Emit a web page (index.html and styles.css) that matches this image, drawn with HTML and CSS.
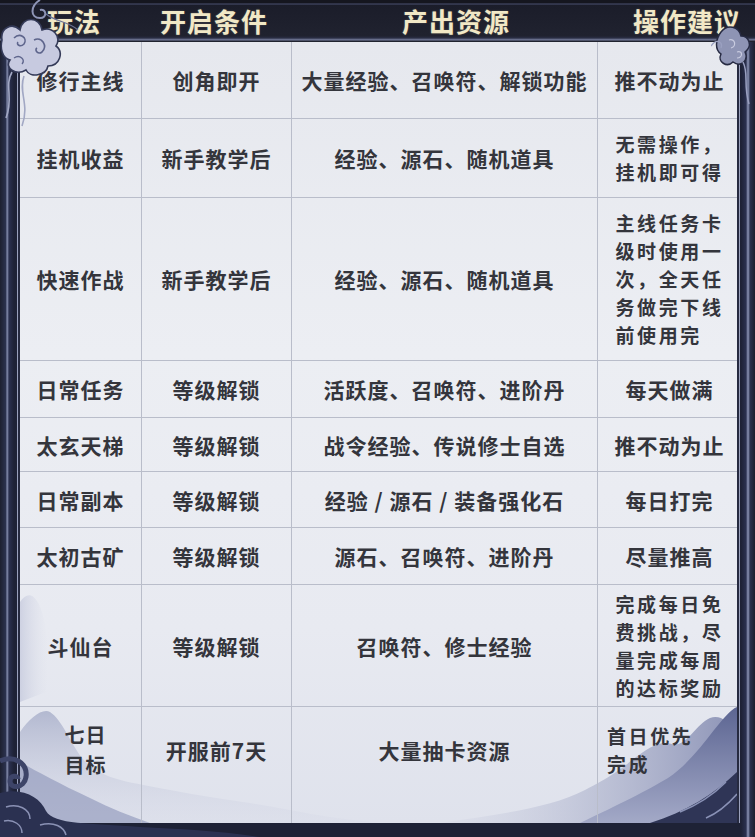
FILE: index.html
```html
<!DOCTYPE html>
<html lang="zh">
<head>
<meta charset="utf-8">
<link rel="stylesheet" href="styles.css">
</head>
<body>
<div class="page">
  <div class="head">
    <span class="h h1">玩法</span>
    <span class="h h2">开启条件</span>
    <span class="h h3">产出资源</span>
    <span class="h h4">操作建议</span>
  </div>
  <div class="body">
    <svg class="mist" width="717" height="781" viewBox="0 0 717 781" preserveAspectRatio="none">
      <defs>
        <linearGradient id="mL" x1="0" y1="0" x2="0" y2="1">
          <stop offset="0" stop-color="#a2a9c6" stop-opacity="0.75"/>
          <stop offset="1" stop-color="#d4d7e6" stop-opacity="0.2"/>
        </linearGradient>
        <linearGradient id="mL2" x1="0" y1="0" x2="1" y2="0">
          <stop offset="0" stop-color="#b9bed6" stop-opacity="0.8"/>
          <stop offset="1" stop-color="#d8dbe8" stop-opacity="0"/>
        </linearGradient>
        <linearGradient id="mR" x1="0" y1="0" x2="0" y2="1">
          <stop offset="0" stop-color="#5c6592"/>
          <stop offset="1" stop-color="#a3a9c7"/>
        </linearGradient>
        <linearGradient id="mR2" x1="0" y1="0" x2="1" y2="0">
          <stop offset="0" stop-color="#c4c8dc" stop-opacity="0.1"/>
          <stop offset="1" stop-color="#8c93b6"/>
        </linearGradient>
      </defs>
      <path d="M0 560 C8 548 16 552 22 570 C28 590 30 620 26 650 L0 660 Z" fill="url(#mL2)" opacity="0.7"/>
      <path d="M0 690 C10 676 22 666 30 670 C42 678 50 700 62 716 C80 738 110 740 150 748 C190 756 230 760 270 768 C300 774 330 778 360 781 L0 781 Z" fill="url(#mL)"/>
      <path d="M0 720 C18 730 40 742 70 756 C90 766 110 774 130 781 L0 781 Z" fill="#8b93b8" opacity="0.6"/>
      <path d="M420 781 C480 772 530 766 565 748 C590 735 600 728 612 718 C628 706 640 698 652 702 C666 706 676 682 690 676 C700 672 708 680 717 688 L717 781 Z" fill="url(#mR2)"/>
      <path d="M560 781 C600 762 628 748 648 736 C666 724 680 706 694 688 C704 676 710 668 717 665 L717 781 Z" fill="url(#mR)"/>
      <path d="M630 781 C666 770 694 752 717 730 L717 781 Z" fill="#2f3556"/>
      <path d="M660 770 C680 762 696 750 706 740 M686 776 C700 770 710 760 717 752" fill="none" stroke="#8a92b6" stroke-width="1.5"/>
    </svg>
    <div class="grid">
      <div class="c r1">修行主线</div><div class="c r1">创角即开</div><div class="c r1">大量经验、召唤符、解锁功能</div><div class="c r1 last">推不动为止</div>
      <div class="c r2">挂机收益</div><div class="c r2">新手教学后</div><div class="c r2">经验、源石、随机道具</div><div class="c r2 last multi">无需操作，<br>挂机即可得</div>
      <div class="c r3">快速作战</div><div class="c r3">新手教学后</div><div class="c r3">经验、源石、随机道具</div><div class="c r3 last multi">主线任务卡<br>级时使用一<br>次，全天任<br>务做完下线<br>前使用完</div>
      <div class="c r4">日常任务</div><div class="c r4">等级解锁</div><div class="c r4">活跃度、召唤符、进阶丹</div><div class="c r4 last">每天做满</div>
      <div class="c r5">太玄天梯</div><div class="c r5">等级解锁</div><div class="c r5">战令经验、传说修士自选</div><div class="c r5 last">推不动为止</div>
      <div class="c r6">日常副本</div><div class="c r6">等级解锁</div><div class="c r6">经验 / 源石 / 装备强化石</div><div class="c r6 last">每日打完</div>
      <div class="c r7">太初古矿</div><div class="c r7">等级解锁</div><div class="c r7">源石、召唤符、进阶丹</div><div class="c r7 last">尽量推高</div>
      <div class="c r8">斗仙台</div><div class="c r8">等级解锁</div><div class="c r8">召唤符、修士经验</div><div class="c r8 last multi">完成每日免<br>费挑战，尽<br>量完成每周<br>的达标奖励</div>
      <div class="c r9 tall">七日<br>目标</div><div class="c r9">开服前7天</div><div class="c r9">大量抽卡资源</div><div class="c r9 last multi left">首日优先<br>完成</div>
    </div>
  </div>
  <svg class="deco tl" width="80" height="130" viewBox="0 0 80 130">
    <path d="M40 0 C30 6 30 18 40 18 C48 18 46 8 40 10" fill="none" stroke="#8e95b6" stroke-width="2"/>
    <path d="M46 14 C56 22 70 22 78 30" fill="none" stroke="#6c7396" stroke-width="1.2"/>
    <path d="M2 40 C0 28 12 22 20 30 C22 16 40 16 42 30 C52 26 62 36 56 46 C64 52 60 66 48 66 C46 76 30 78 26 70 C16 76 4 68 10 60 C2 58 0 48 2 40 Z" fill="#c7cae0" stroke="#343a58" stroke-width="1.6"/>
    <path d="M14 38 C20 32 28 38 24 44 C20 48 16 44 18 42" fill="none" stroke="#5e658c" stroke-width="1.6"/>
    <path d="M34 40 C42 36 48 46 42 52 C38 55 34 50 37 48" fill="none" stroke="#5e658c" stroke-width="1.6"/>
    <path d="M14 58 C20 54 26 60 22 64" fill="none" stroke="#5e658c" stroke-width="1.4"/>
    <path d="M12 72 C4 86 14 98 6 118 M24 76 C18 92 30 104 22 126" fill="none" stroke="#a2a8c4" stroke-width="1.6"/>
  </svg>
  <svg class="deco tr" width="44" height="90" viewBox="0 0 44 90">
    <path d="M10 16 C16 8 28 10 30 20 C38 20 42 30 34 36 C38 44 30 52 22 46 C16 52 6 46 10 38 C4 34 4 24 10 16 Z" fill="#8e94b4" stroke="#262a42" stroke-width="1.5"/>
    <path d="M18 24 C24 22 26 30 20 32 M26 36 C32 34 32 42 26 42" fill="none" stroke="#c9cce0" stroke-width="1.2"/>
    <path d="M0 30 C6 22 12 26 10 32" fill="none" stroke="#9aa0c0" stroke-width="1.3"/>
    <path d="M32 46 C38 58 32 68 38 88" fill="none" stroke="#9aa0c0" stroke-width="1.5"/>
  </svg>
  <svg class="deco bl" width="260" height="90" viewBox="0 0 260 90">
    <path d="M0 14 C14 8 28 16 26 30 C24 42 10 42 10 34 C10 28 18 28 18 32" fill="none" stroke="#3d4468" stroke-width="5"/>
    <path d="M0 46 C22 40 40 50 46 64 C54 78 90 76 140 80 C180 82 220 84 260 90 L0 90 Z" fill="#2b3151"/>
    <path d="M6 60 C18 56 30 62 30 72 M4 74 C14 72 22 78 22 86 M40 78 C54 74 64 80 66 88" fill="none" stroke="#8a91b4" stroke-width="1.5"/>
  </svg>
</div>
</body>
</html>
```
FILE: styles.css
```css
html, body {
  margin: 0;
  padding: 0;
}
body {
  background: #1b1d2b;
  font-family: "Noto Sans CJK SC", "Noto Sans", sans-serif;
}
.page {
  position: relative;
  width: 755px;
  height: 837px;
  overflow: hidden;
  background: linear-gradient(90deg, #1d2030 0, #2c3350 6px, #8f97b8 7px, #2b3150 9px, #1e2236 14px, #1e2236 741px, #2b3150 746px, #8f97b8 748px, #2c3350 750px, #1d2030 755px);
}
.head {
  height: 42px;
  display: grid;
  grid-template-columns: 148px 132px 352px 110px;
  align-items: center;
  background: linear-gradient(180deg, #15161f 0, #15161f 3px, #4a5070 4px, #1b1d2a 5px, #20222f 36px, #2a2e44 38px, #7b82a2 40px, #20232f 41px);
}
.h {
  justify-self: center;
  white-space: nowrap;
  color: #f1e8c6;
  font-size: 26px;
  font-weight: 700;
  letter-spacing: 1px;
  line-height: 38px;
  text-shadow: 0 0 2px rgba(255, 240, 200, 0.25);
}
.body {
  position: relative;
  margin-left: 20px;
  width: 717px;
  height: 781px;
  background: linear-gradient(180deg, #e6e8ee 0, #eceef3 40%, #e8eaf1 75%, #dfe2ec 100%);
  box-shadow: -2px 0 0 #262a40, 2px 0 0 #262a40, -3px 0 0 #9aa1bd, 3px 0 0 #9aa1bd;
}
.mist {
  position: absolute;
  left: 0;
  top: 0;
}
.grid {
  position: relative;
  display: grid;
  grid-template-columns: 122px 150px 306px 139px;
  grid-template-rows: 77px 79px 163px 57px 54px 56px 57px 122px 116px;
  color: #34353c;
  font-size: 21px;
  font-weight: 700;
  letter-spacing: 1px;
}
.c {
  display: flex;
  align-items: center;
  justify-content: center;
  text-align: center;
  border-right: 1px solid #b9bdca;
  border-bottom: 1px solid #b9bdca;
  line-height: 30px;
}
.c.last {
  border-right: none;
  text-align: left;
  padding-left: 4px;
}
.c.multi {
  font-size: 19px;
  letter-spacing: 2.6px;
  line-height: 28px;
}
.c.r9 {
  border-bottom: none;
  padding-bottom: 30px;
}
.c.tall {
  font-size: 20px;
  line-height: 30px;
  padding-left: 10px;
}
.c.left {
  justify-content: flex-start;
  padding-left: 9px;
}
.deco {
  position: absolute;
}
.tl {
  left: 0;
  top: 0;
}
.tr {
  right: 0;
  top: 16px;
}
.bl {
  left: 0;
  bottom: 0;
}
```
